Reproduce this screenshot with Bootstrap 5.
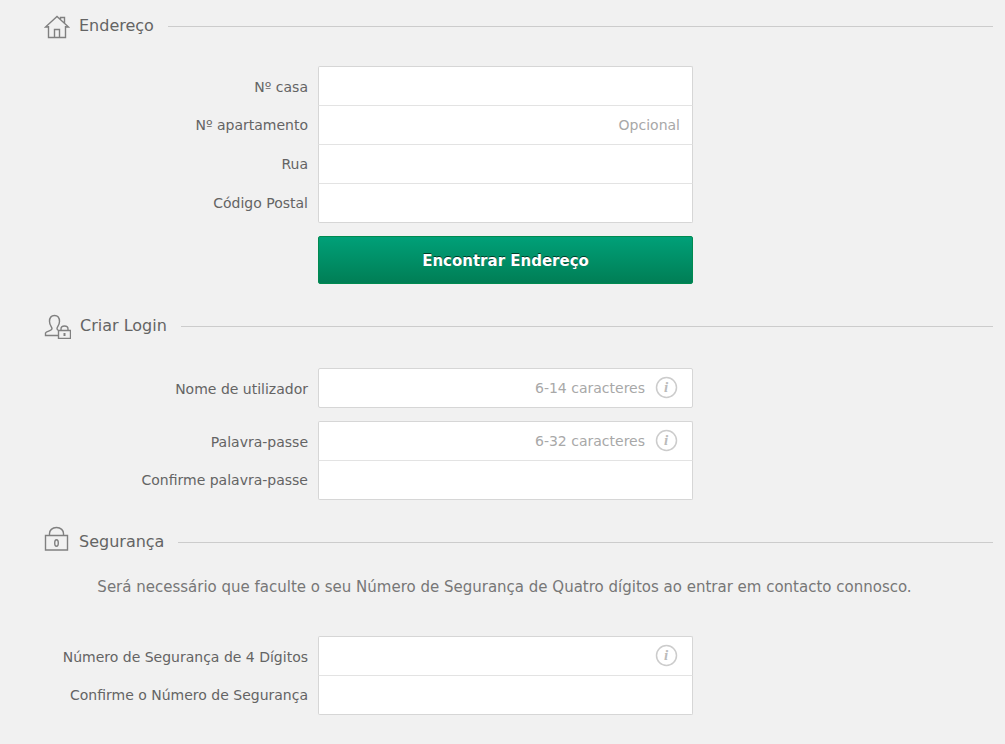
<!DOCTYPE html>
<html lang="pt">
<head>
<meta charset="utf-8">
<meta name="viewport" content="width=device-width, initial-scale=1">
<title>Registo</title>
<link rel="stylesheet" href="https://cdn.jsdelivr.net/npm/bootstrap@5.3.0/dist/css/bootstrap.min.css">
<style>
  body { background: #f1f1f1; color: #646464; font-family: Verdana, "DejaVu Sans", sans-serif; font-size: 14px; line-height: 20px; }
  .section-head { height: 26px; margin: 29px 12px 29px 44px; }
  .section-head.first { margin-top: 13px; margin-bottom: 27px; }
  .section-head.tight { margin-bottom: 20px; }
  .section-head h2 { font-size: 16px; line-height: 24px; font-weight: 400; margin: 0 0 0 9px; }
  .section-head svg { fill: none; stroke: #808080; stroke-width: 1.4; }
  .section-head .rule { height: 1px; background: #ccc; margin-left: 14px; }
  .fields { padding-left: 6px; margin-bottom: 13px; }
  .field-line { display: grid; grid-template-columns: 1fr minmax(0, 375px) 1fr; }
  .field-line label { text-align: right; padding: 10px 10px 8px 0; white-space: nowrap; }
  .field-line:first-child label { padding: 11px 10px 8px 0; }
  .field-line .form-control { height: 39px; padding: 0 12px; border: 1px solid #d6d6d6; border-bottom: 0; border-top-color: #e3e3e3; border-radius: 0; font-size: 14px; background: #fff; }
  .field-line:first-child .form-control { border-top-color: #d6d6d6; border-top-left-radius: 2px; border-top-right-radius: 2px; }
  .field-line:last-child .form-control { height: 40px; border-bottom: 1px solid #d6d6d6; border-bottom-left-radius: 2px; border-bottom-right-radius: 2px; }
  .form-control::placeholder { color: #a8a8a8; text-align: right; }
  .field-line .with-info { padding-right: 47px; }
  .info { right: 15px; top: 8px; width: 23px; height: 23px; }
  .info svg { display: block; fill: none; stroke: #ccc; stroke-width: 1.5; }
  .info .glyph { stroke: none; fill: #bbb; font: italic 700 15px "Liberation Serif", serif; }
  .find { grid-column: 2; height: 48px; padding-top: 8px; border: 1px solid #008a50; border-radius: 2px; background: linear-gradient(#00a078, #007e55); color: #fff; font-size: 15px; font-weight: 700; text-shadow: 0 -1px 0 #003d28; }
  .find:hover { color: #fff; }
  .note { font-size: 15px; line-height: 24px; color: #777; padding-left: 4px; margin-bottom: 37px; }
</style>
</head>
<body>
<form>
  <div class="section-head first d-flex align-items-center">
    <svg width="26" height="26" viewBox="0 0 26 26" aria-hidden="true"><path d="M4.500 13v11.500h17V13M5 14H1.500L13 3.500 24.500 14H21M16.500 6V4.500h4v5.500M10.500 24.500v-8h5v8"/></svg>
    <h2>Endereço</h2><div class="rule flex-grow-1"></div>
  </div>
  <div class="fields">
    <div class="field-line"><label for="casa">Nº casa</label><input class="form-control" id="casa" type="text"></div>
    <div class="field-line"><label for="apt">Nº apartamento</label><input class="form-control" id="apt" type="text" placeholder="Opcional"></div>
    <div class="field-line"><label for="rua">Rua</label><input class="form-control" id="rua" type="text"></div>
    <div class="field-line"><label for="cp">Código Postal</label><input class="form-control" id="cp" type="text"></div>
  </div>
  <div class="fields mb-0"><div class="field-line"><button type="button" class="btn find">Encontrar Endereço</button></div></div>

  <div class="section-head d-flex align-items-center">
    <svg width="27" height="26" viewBox="0 0 27 26" aria-hidden="true"><path d="M14 22.500H1.500v-2.500c1-2 6.500-2 6.500-4.500 0-1.500-2.500-3-2.500-7 0-4 2-6 5-6s5 2 5 6c0 3.500-2.500 5.500-2.500 7 0 .8.500 1.400 1.500 2M14.500 17.500h12v8h-12zM17 17.500v-1.500c0-4 7-4 7 0v1.500"/><path d="M20.500 20v3" stroke-width="2"/></svg>
    <h2>Criar Login</h2><div class="rule flex-grow-1"></div>
  </div>
  <div class="fields">
    <div class="field-line"><label for="user">Nome de utilizador</label>
      <div class="position-relative"><input class="form-control with-info" id="user" type="text" placeholder="6-14 caracteres">
        <button type="button" class="info btn p-0 border-0 position-absolute" aria-label="Informação"><svg width="23" height="23" viewBox="0 0 23 23"><circle cx="11.500" cy="11.500" r="10"/><text class="glyph" x="9" y="16">i</text></svg></button></div></div>
  </div>
  <div class="fields mb-0">
    <div class="field-line"><label for="pass">Palavra-passe</label>
      <div class="position-relative"><input class="form-control with-info" id="pass" type="password" placeholder="6-32 caracteres">
        <button type="button" class="info btn p-0 border-0 position-absolute" aria-label="Informação"><svg width="23" height="23" viewBox="0 0 23 23"><circle cx="11.500" cy="11.500" r="10"/><text class="glyph" x="9" y="16">i</text></svg></button></div></div>
    <div class="field-line"><label for="pass2">Confirme palavra-passe</label><input class="form-control" id="pass2" type="password"></div>
  </div>

  <div class="section-head tight d-flex align-items-center">
    <svg class="mb-2" width="26" height="26" viewBox="0 0 26 26" aria-hidden="true"><path d="M1.500 10.500h22v14.500h-22zM5.500 10.500V8.500c0-3 2.500-6 7-6s7 3 7 6v2"/><ellipse cx="12.500" cy="18" rx="1.800" ry="3.200"/></svg>
    <h2>Segurança</h2><div class="rule flex-grow-1"></div>
  </div>
  <p class="note text-center">Será necessário que faculte o seu Número de Segurança de Quatro dígitos ao entrar em contacto connosco.</p>
  <div class="fields">
    <div class="field-line"><label for="pin">Número de Segurança de 4 Dígitos</label>
      <div class="position-relative"><input class="form-control with-info" id="pin" type="password">
        <button type="button" class="info btn p-0 border-0 position-absolute" aria-label="Informação"><svg width="23" height="23" viewBox="0 0 23 23"><circle cx="11.500" cy="11.500" r="10"/><text class="glyph" x="9" y="16">i</text></svg></button></div></div>
    <div class="field-line"><label for="pin2">Confirme o Número de Segurança</label><input class="form-control" id="pin2" type="password"></div>
  </div>
</form>
<script src="https://cdn.jsdelivr.net/npm/bootstrap@5.3.0/dist/js/bootstrap.bundle.min.js"></script>
</body>
</html>
